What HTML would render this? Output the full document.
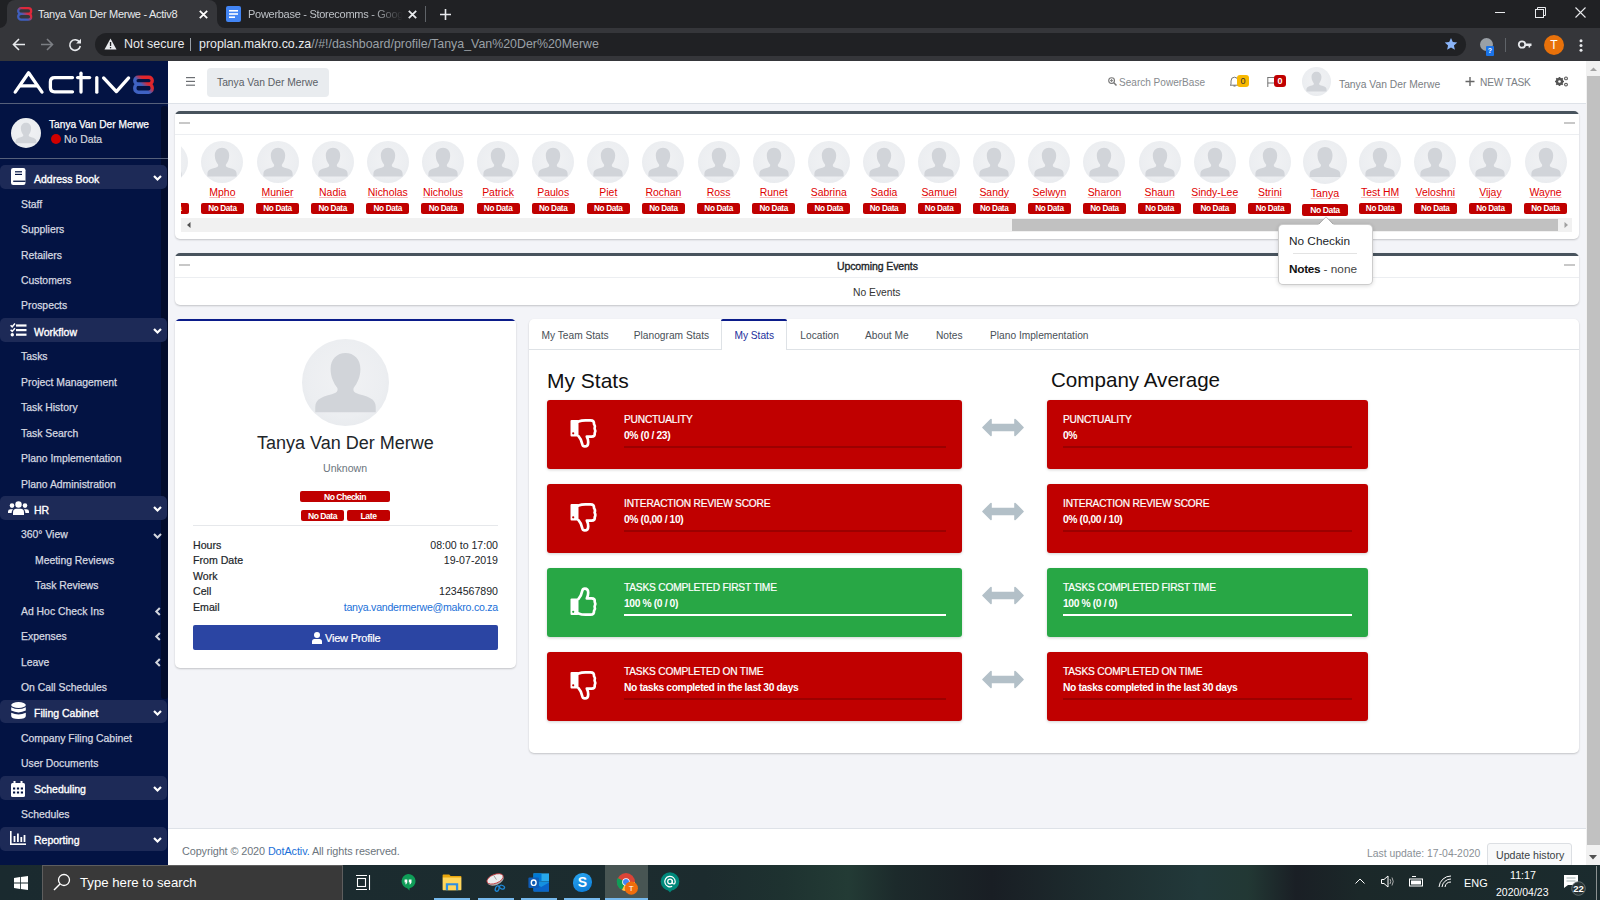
<!DOCTYPE html><html><head><meta charset="utf-8"><style>
*{box-sizing:border-box;margin:0;padding:0}
html,body{width:1600px;height:900px;overflow:hidden;background:#f3f4f8;font-family:"Liberation Sans",sans-serif;}
.a{position:absolute}
.t{position:absolute;white-space:nowrap;line-height:1}
svg{position:absolute;overflow:visible}
.sbi{position:absolute;left:21px;font-size:10.4px;color:#d6d9e0;white-space:nowrap;line-height:1;-webkit-text-stroke:0.25px #d6d9e0}
.sbh{position:absolute;left:0;width:167px;height:24px;background:#1d2a57;border-radius:5px}
.sbht{position:absolute;left:34px;font-size:10.5px;color:#fff;white-space:nowrap;line-height:1;-webkit-text-stroke:0.35px #fff}
.av{position:absolute;border-radius:50%;background:radial-gradient(circle at 50% 45%,#f1f2f4 0%,#eceef1 60%,#e3e6ea 100%);overflow:hidden}
.nm{position:absolute;font-size:10.45px;color:#e00000;text-decoration:underline;text-decoration-color:#f9bcbc;white-space:nowrap;line-height:1;text-align:center;width:60px}
.bd{position:absolute;background:#c00000;color:#fff;font-size:8.2px;font-weight:bold;text-align:center;border-radius:2px;line-height:11px;height:11px;letter-spacing:-0.35px}
.tab{position:absolute;top:331px;font-size:10.2px;color:#495057;white-space:nowrap;line-height:1}
.blk{position:absolute;border-radius:3px;box-shadow:0 1px 3px rgba(0,0,0,.18)}
.bt{position:absolute;font-size:10.2px;color:#fff;white-space:nowrap;line-height:1;letter-spacing:-0.2px;-webkit-text-stroke:0.2px #fff}
.bv{position:absolute;font-size:10.3px;color:#fff;font-weight:bold;white-space:nowrap;line-height:1;letter-spacing:-0.38px}
.pl{position:absolute;left:193px;font-size:10.6px;color:#212529;-webkit-text-stroke:0.2px #212529;white-space:nowrap;line-height:1}
.pv{position:absolute;right:1102px;font-size:10.6px;color:#212529;white-space:nowrap;line-height:1;text-align:right}
</style></head><body>

<div class="a" style="left:0;top:0;width:1600px;height:28px;background:#202124"></div>
<div class="a" style="left:0;top:28px;width:1600px;height:33px;background:#35363a"></div>
<div class="a" style="left:7px;top:0;width:210px;height:28px;background:#35363a;border-radius:8px 8px 0 0"></div>
<div class="a" style="left:0;top:18px;width:230px;height:10px;background:#35363a"></div>
<div class="a" style="left:-20px;top:0;width:27px;height:28px;background:#202124;border-radius:0 0 8px 0"></div>
<div class="a" style="left:217px;top:0;width:260px;height:28px;background:#202124;border-radius:0 0 0 8px"></div>
<svg style="left:17px;top:7px" width="16" height="14" viewBox="0 0 16 14"><defs><linearGradient id="g8" gradientUnits="userSpaceOnUse" x1="2" y1="13" x2="14" y2="1"><stop offset="0.35" stop-color="#3f5fc0"/><stop offset="0.65" stop-color="#e0283a"/></linearGradient></defs><rect x="1.2" y="1.2" width="13" height="5.6" rx="2.8" fill="none" stroke="url(#g8)" stroke-width="2.2"/><rect x="1.2" y="6.8" width="13" height="5.8" rx="2.9" fill="none" stroke="url(#g8)" stroke-width="2.2"/></svg>
<div class="t" style="left:38px;top:8.5px;font-size:11px;letter-spacing:-0.28px;color:#e8eaed">Tanya Van Der Merwe - Activ8</div>
<svg style="left:199px;top:10px" width="9" height="9" viewBox="0 0 9 9"><path d="M0.8 0.8L8.2 8.2M8.2 0.8L0.8 8.2" stroke="#fff" stroke-width="1.8"/></svg>
<svg style="left:226px;top:6px" width="15" height="16" viewBox="0 0 15 16"><rect x="0" y="0" width="15" height="16" rx="2" fill="#4285f4"/><rect x="3" y="4" width="9" height="1.6" fill="#fff"/><rect x="3" y="7.2" width="9" height="1.6" fill="#fff"/><rect x="3" y="10.4" width="6" height="1.6" fill="#fff"/></svg>
<div class="t" style="left:248px;top:8.5px;font-size:11px;letter-spacing:-0.28px;color:#bdc1c6;width:155px;overflow:hidden;-webkit-mask-image:linear-gradient(90deg,#000 80%,transparent)">Powerbase - Storecomms - Google Sheets</div>
<svg style="left:408px;top:10px" width="9" height="9" viewBox="0 0 9 9"><path d="M0.8 0.8L8.2 8.2M8.2 0.8L0.8 8.2" stroke="#e8eaed" stroke-width="1.8"/></svg>
<div class="a" style="left:425px;top:6px;width:1px;height:16px;background:#5f6368"></div>
<svg style="left:440px;top:9px" width="11" height="11" viewBox="0 0 11 11"><path d="M5.5 0V11M0 5.5H11" stroke="#e8eaed" stroke-width="1.6"/></svg>
<div class="a" style="left:1495px;top:12px;width:10px;height:1px;background:#e8eaed"></div>
<svg style="left:1535px;top:7px" width="11" height="11" viewBox="0 0 11 11"><rect x="0.5" y="2.5" width="8" height="8" fill="none" stroke="#e8eaed"/><path d="M2.5 2.5V0.5H10.5V8.5H8.5" fill="none" stroke="#e8eaed"/></svg>
<svg style="left:1575px;top:7px" width="11" height="11" viewBox="0 0 11 11"><path d="M0.5 0.5L10.5 10.5M10.5 0.5L0.5 10.5" stroke="#e8eaed" stroke-width="1.1"/></svg>
<svg style="left:12px;top:38px" width="14" height="13" viewBox="0 0 14 13"><path d="M13 6.5H1.5M7 1L1.5 6.5L7 12" fill="none" stroke="#e8eaed" stroke-width="1.6"/></svg>
<svg style="left:40px;top:38px" width="14" height="13" viewBox="0 0 14 13"><path d="M1 6.5H12.5M7 1L12.5 6.5L7 12" fill="none" stroke="#7c7f84" stroke-width="1.6"/></svg>
<svg style="left:68px;top:38px" width="14" height="14" viewBox="0 0 14 14"><path d="M11.6 4.2A5.3 5.3 0 1 0 12.3 8" fill="none" stroke="#e8eaed" stroke-width="1.6"/><path d="M13 0.8V5.6H8.2Z" fill="#e8eaed"/></svg>
<div class="a" style="left:95px;top:33px;width:1371px;height:23px;background:#202124;border-radius:12px"></div>
<svg style="left:104px;top:38px" width="13" height="12" viewBox="0 0 13 12"><path d="M6.5 0.5L12.5 11.5H0.5Z" fill="#e8eaed"/><rect x="5.9" y="4" width="1.3" height="4" fill="#202124"/><rect x="5.9" y="9" width="1.3" height="1.3" fill="#202124"/></svg>
<div class="t" style="left:124px;top:38px;font-size:12.5px;color:#e8eaed">Not secure</div>
<div class="a" style="left:190px;top:38px;width:1px;height:13px;background:#9aa0a6"></div>
<div class="t" style="left:199px;top:38px;font-size:12.4px;color:#e8eaed">proplan.makro.co.za<span style="color:#9aa0a6">//#!/dashboard/profile/Tanya_Van%20Der%20Merwe</span></div>
<svg style="left:1444px;top:37px" width="14" height="14" viewBox="0 0 24 24"><path d="M12 1.5l3.1 7.1 7.7.7-5.8 5.1 1.7 7.6L12 18l-6.7 4 1.7-7.6L1.2 9.3l7.7-.7z" fill="#8ab4f8"/></svg>
<div class="a" style="left:1480px;top:38px;width:13px;height:13px;border-radius:50%;background:#9aa0a6"></div>
<div class="a" style="left:1486px;top:46px;width:8px;height:10px;border-radius:1px;background:#1a73e8;color:#fff;font-size:7px;font-weight:bold;text-align:center;line-height:10px;font-family:'Liberation Sans'">?</div>
<div class="a" style="left:1505px;top:38px;width:1px;height:14px;background:#5f6368"></div>
<svg style="left:1518px;top:40px" width="14" height="9" viewBox="0 0 14 9"><circle cx="4" cy="4.5" r="3.2" fill="none" stroke="#e8eaed" stroke-width="1.8"/><path d="M7 3.6H13.5V6H12.2V7.6H10.6V6H7Z" fill="#e8eaed"/></svg>
<div class="a" style="left:1544px;top:35px;width:20px;height:20px;border-radius:50%;background:#e8710a;color:#fff;font-size:12px;text-align:center;line-height:20px">T</div>
<svg style="left:1579px;top:39px" width="4" height="13" viewBox="0 0 4 13"><circle cx="2" cy="1.8" r="1.5" fill="#e8eaed"/><circle cx="2" cy="6.5" r="1.5" fill="#e8eaed"/><circle cx="2" cy="11.2" r="1.5" fill="#e8eaed"/></svg>
<div class="a" style="left:0;top:61px;width:168px;height:804px;background:#031343"></div>
<svg style="left:0;top:61px" width="168" height="42" viewBox="0 61 168 42">
<g fill="none" stroke="#fff" stroke-width="3.3" stroke-linecap="round" stroke-linejoin="round">
<path d="M15.2 92.1L28.6 72.8L42 92.1"/><path d="M20.5 85.8H37"/>
<path d="M72.5 77.6H54.6Q50.4 77.6 50.4 81.8V87.6Q50.4 91.8 54.6 91.8H72.5"/>
<path d="M81 73.2V92.1"/><path d="M77.6 77.6H89.6"/>
<path d="M96.8 77.6V92.2"/>
<path d="M103.6 77.9L116.4 91.6L128.6 77.9"/>
</g>
<defs><linearGradient id="lg8" gradientUnits="userSpaceOnUse" x1="137" y1="91" x2="151" y2="77"><stop offset="0.38" stop-color="#3f62c3"/><stop offset="0.66" stop-color="#e0262c"/></linearGradient></defs>
<g fill="none" stroke="url(#lg8)" stroke-width="3.4"><rect x="134.8" y="77.2" width="17.4" height="6.9" rx="3.4"/><rect x="134.8" y="84.1" width="17.4" height="8.1" rx="3.6"/></g>
</svg>
<div class="a" style="left:0;top:103px;width:168px;height:1px;background:#56607a"></div>
<div class="a" style="left:161px;top:106px;width:7px;height:593px;background:#020c2c;border-radius:3px"></div>
<div class="av" style="left:11px;top:118px;width:30px;height:30px;box-shadow:0 0 1px rgba(0,0,0,.3)"><svg style="left:0;top:0" width="30" height="30" viewBox="0 0 42 42"><path d="M21 6.7C25 6.7 28.2 9.5 28.2 14.5C28.2 18.5 26.6 21.5 25 23.5C24.6 24.2 24.8 25.4 25.8 26C28 27 31 27.5 33 28.6C34.8 29.5 35.6 31 35.6 32.8V35.4H6.4V32.8C6.4 31 7.2 29.5 9 28.6C11 27.5 14 27 16.2 26C17.2 25.4 17.4 24.2 17 23.5C15.4 21.5 13.8 18.5 13.8 14.5C13.8 9.5 17 6.7 21 6.7Z" fill="#d1d4d9"/></svg></div>
<div class="t" style="left:49px;top:120px;font-size:10.2px;color:#fff;-webkit-text-stroke:0.25px #fff">Tanya Van Der Merwe</div>
<div class="a" style="left:51px;top:134px;width:10px;height:10px;border-radius:50%;background:#d00000"></div>
<div class="t" style="left:64px;top:135px;font-size:10.4px;color:#d3d6de;-webkit-text-stroke:0.2px #d3d6de">No Data</div>
<div class="a" style="left:0;top:158px;width:168px;height:1px;background:#56607a"></div>
<div class="sbh" style="top:165.4px;height:23.8px"></div>
<div class="sbht" style="top:173.8px">Address Book</div>
<svg style="left:11px;top:168.1px" width="15" height="17" viewBox="0 0 15 17"><rect x="0" y="0" width="14.5" height="17" rx="2.2" fill="#fff"/><rect x="4" y="3.2" width="7" height="1.2" fill="#031343"/><rect x="4" y="5.8" width="7" height="1.2" fill="#031343"/><rect x="2.2" y="12.6" width="12.3" height="1.3" fill="#031343"/></svg>
<svg style="left:153px;top:175.4px" width="9" height="6" viewBox="0 0 9 6"><path d="M1 1L4.5 4.5L8 1" fill="none" stroke="#fff" stroke-width="2.2"/></svg>
<div class="sbi" style="left:21px;top:199.6px">Staff</div>
<div class="sbi" style="left:21px;top:225.1px">Suppliers</div>
<div class="sbi" style="left:21px;top:250.5px">Retailers</div>
<div class="sbi" style="left:21px;top:276.0px">Customers</div>
<div class="sbi" style="left:21px;top:301.4px">Prospects</div>
<div class="sbh" style="top:318.1px;height:23.8px"></div>
<div class="sbht" style="top:326.5px">Workflow</div>
<svg style="left:10px;top:322.6px" width="17" height="15" viewBox="0 0 17 15"><g fill="#fff"><rect x="6" y="1.4" width="10.5" height="2.2"/><rect x="6" y="6" width="10.5" height="2.2"/><rect x="6" y="10.6" width="10.5" height="2.2"/><circle cx="2.3" cy="11.8" r="1.7"/></g><path d="M0.6 2.2L2.2 3.8L5 0.6M0.6 6.8L2.2 8.4L5 5.2" fill="none" stroke="#fff" stroke-width="1.5"/></svg>
<svg style="left:153px;top:328.1px" width="9" height="6" viewBox="0 0 9 6"><path d="M1 1L4.5 4.5L8 1" fill="none" stroke="#fff" stroke-width="2.2"/></svg>
<div class="sbi" style="left:21px;top:352.3px">Tasks</div>
<div class="sbi" style="left:21px;top:377.7px">Project Management</div>
<div class="sbi" style="left:21px;top:403.2px">Task History</div>
<div class="sbi" style="left:21px;top:428.6px">Task Search</div>
<div class="sbi" style="left:21px;top:454.1px">Plano Implementation</div>
<div class="sbi" style="left:21px;top:479.5px">Plano Administration</div>
<div class="sbh" style="top:496.1px;height:23.8px"></div>
<div class="sbht" style="top:504.5px">HR</div>
<svg style="left:8px;top:500.6px" width="21" height="14" viewBox="0 0 21 14"><g fill="#fff"><circle cx="10.5" cy="3.5" r="3.2"/><path d="M5 14V11.5Q5 7.8 8.5 7.8H12.5Q16 7.8 16 11.5V14Z"/><circle cx="4" cy="4.6" r="2.3"/><circle cx="17" cy="4.6" r="2.3"/><path d="M0 12V10.5Q0 8.2 2.5 8.2H5Q3.6 9.6 3.6 12Z"/><path d="M21 12V10.5Q21 8.2 18.5 8.2H16Q17.4 9.6 17.4 12Z"/></g></svg>
<svg style="left:153px;top:506.1px" width="9" height="6" viewBox="0 0 9 6"><path d="M1 1L4.5 4.5L8 1" fill="none" stroke="#fff" stroke-width="2.2"/></svg>
<div class="sbi" style="left:21px;top:530.4px">360° View</div>
<svg style="left:153px;top:532.6px" width="9" height="6" viewBox="0 0 9 6"><path d="M1 1L4.5 4.5L8 1" fill="none" stroke="#d3d6de" stroke-width="2"/></svg>
<div class="sbi" style="left:35px;top:555.8px">Meeting Reviews</div>
<div class="sbi" style="left:35px;top:581.3px">Task Reviews</div>
<div class="sbi" style="left:21px;top:606.7px">Ad Hoc Check Ins</div>
<svg style="left:155px;top:606.9px" width="6" height="9" viewBox="0 0 6 9"><path d="M4.8 1L1.3 4.5L4.8 8" fill="none" stroke="#d3d6de" stroke-width="2"/></svg>
<div class="sbi" style="left:21px;top:632.2px">Expenses</div>
<svg style="left:155px;top:632.4px" width="6" height="9" viewBox="0 0 6 9"><path d="M4.8 1L1.3 4.5L4.8 8" fill="none" stroke="#d3d6de" stroke-width="2"/></svg>
<div class="sbi" style="left:21px;top:657.6px">Leave</div>
<svg style="left:155px;top:657.8px" width="6" height="9" viewBox="0 0 6 9"><path d="M4.8 1L1.3 4.5L4.8 8" fill="none" stroke="#d3d6de" stroke-width="2"/></svg>
<div class="sbi" style="left:21px;top:683.0px">On Call Schedules</div>
<div class="sbh" style="top:699.7px;height:23.8px"></div>
<div class="sbht" style="top:708.1px">Filing Cabinet</div>
<svg style="left:11px;top:702.4px" width="15" height="17" viewBox="0 0 15 17"><g fill="#fff"><ellipse cx="7.5" cy="3" rx="7.3" ry="3"/><path d="M0.2 5.2Q7.5 9 14.8 5.2V8.6Q7.5 12.2 0.2 8.6Z"/><path d="M0.2 10.8Q7.5 14.4 14.8 10.8V14Q14.8 17 7.5 17Q0.2 17 0.2 14Z"/></g></svg>
<svg style="left:153px;top:709.7px" width="9" height="6" viewBox="0 0 9 6"><path d="M1 1L4.5 4.5L8 1" fill="none" stroke="#fff" stroke-width="2.2"/></svg>
<div class="sbi" style="left:21px;top:733.9px">Company Filing Cabinet</div>
<div class="sbi" style="left:21px;top:759.4px">User Documents</div>
<div class="sbh" style="top:776.0px;height:23.8px"></div>
<div class="sbht" style="top:784.4px">Scheduling</div>
<svg style="left:11px;top:780.5px" width="14" height="16" viewBox="0 0 14 16"><g fill="#fff"><rect x="0" y="2" width="14" height="14" rx="1.5"/><rect x="2.5" y="0" width="2" height="3.5"/><rect x="9.5" y="0" width="2" height="3.5"/></g><g fill="#031343"><rect x="2" y="6.5" width="2.2" height="2"/><rect x="5.9" y="6.5" width="2.2" height="2"/><rect x="9.8" y="6.5" width="2.2" height="2"/><rect x="2" y="10.5" width="2.2" height="2"/><rect x="5.9" y="10.5" width="2.2" height="2"/><rect x="9.8" y="10.5" width="2.2" height="2"/></g></svg>
<svg style="left:153px;top:786.0px" width="9" height="6" viewBox="0 0 9 6"><path d="M1 1L4.5 4.5L8 1" fill="none" stroke="#fff" stroke-width="2.2"/></svg>
<div class="sbi" style="left:21px;top:810.2px">Schedules</div>
<div class="sbh" style="top:826.9px;height:23.8px"></div>
<div class="sbht" style="top:835.3px">Reporting</div>
<svg style="left:10px;top:831.4px" width="16" height="14" viewBox="0 0 16 14"><g fill="#fff"><rect x="0" y="0" width="1.6" height="14"/><rect x="0" y="12.4" width="16" height="1.6"/><rect x="3.6" y="5" width="1.8" height="6"/><rect x="7" y="2.5" width="1.8" height="8.5"/><rect x="10.4" y="6" width="1.8" height="5"/><rect x="13.6" y="4" width="1.8" height="7"/></g></svg>
<svg style="left:153px;top:836.9px" width="9" height="6" viewBox="0 0 9 6"><path d="M1 1L4.5 4.5L8 1" fill="none" stroke="#fff" stroke-width="2.2"/></svg>
<div class="a" style="left:168px;top:61px;width:1418px;height:43px;background:#fff;border-bottom:1px solid #dee2e8"></div>
<svg style="left:186px;top:77px" width="9" height="9" viewBox="0 0 9 9"><g fill="#6c6f73"><rect y="0" width="9" height="1.2"/><rect y="3.8" width="9" height="1.2"/><rect y="7.6" width="9" height="1.2"/></g></svg>
<div class="a" style="left:207px;top:68px;width:122px;height:29px;background:#e9ecef;border-radius:4px"></div>
<div class="t" style="left:217px;top:78px;font-size:10.3px;color:#5a6066">Tanya Van Der Merwe</div>
<svg style="left:1108px;top:77px" width="9" height="9" viewBox="0 0 9 9"><circle cx="3.6" cy="3.6" r="2.9" fill="none" stroke="#777" stroke-width="1.1"/><path d="M5.8 5.8L8.5 8.5" stroke="#777" stroke-width="1.5"/><path d="M3.6 2V5.2M2 3.6H5.2" stroke="#777" stroke-width="0.9"/></svg>
<div class="t" style="left:1119px;top:77.5px;font-size:10.05px;color:#868a8e">Search PowerBase</div>
<svg style="left:1230px;top:76px" width="9" height="11" viewBox="0 0 9 11"><path d="M1 8.5V5Q1 1.2 4.5 1.2Q8 1.2 8 5V8.5L8.8 9.2H0.2Z" fill="none" stroke="#666" stroke-width="0.9"/><path d="M3.5 10H5.5" stroke="#666"/></svg>
<div class="a" style="left:1237px;top:75px;width:12px;height:12px;border-radius:3px;background:#f8b800;color:#333;font-size:9px;text-align:center;line-height:12px">0</div>
<svg style="left:1267px;top:76px" width="9" height="11" viewBox="0 0 9 11"><path d="M0.8 11V1M0.8 1.5H8V7H0.8" fill="none" stroke="#666" stroke-width="0.9"/></svg>
<div class="a" style="left:1274px;top:75px;width:12px;height:12px;border-radius:3px;background:#c00000;color:#fff;font-size:9px;font-weight:bold;text-align:center;line-height:12px">0</div>
<div class="av" style="left:1302px;top:67px;width:29px;height:29px;"><svg style="left:0;top:0" width="29" height="29" viewBox="0 0 42 42"><path d="M21 6.7C25 6.7 28.2 9.5 28.2 14.5C28.2 18.5 26.6 21.5 25 23.5C24.6 24.2 24.8 25.4 25.8 26C28 27 31 27.5 33 28.6C34.8 29.5 35.6 31 35.6 32.8V35.4H6.4V32.8C6.4 31 7.2 29.5 9 28.6C11 27.5 14 27 16.2 26C17.2 25.4 17.4 24.2 17 23.5C15.4 21.5 13.8 18.5 13.8 14.5C13.8 9.5 17 6.7 21 6.7Z" fill="#d1d4d9"/></svg></div>
<div class="t" style="left:1339px;top:80px;font-size:10.3px;color:#7a7e83">Tanya Van Der Merwe</div>
<svg style="left:1465px;top:77px" width="10" height="9" viewBox="0 0 10 9"><path d="M5 0V9M0.5 4.5H9.5" stroke="#666" stroke-width="1.4"/></svg>
<div class="t" style="left:1480px;top:78px;font-size:10.2px;color:#7a7e83;letter-spacing:-0.2px">NEW TASK</div>
<svg style="left:1554px;top:76px" width="15" height="11" viewBox="0 0 15 11"><g fill="none" stroke="#555"><circle cx="5.5" cy="5.5" r="2.6" stroke-width="2.2"/><path d="M5.5 1V10M1 5.5H10M2.3 2.3L8.7 8.7M8.7 2.3L2.3 8.7" stroke-width="1.6"/><circle cx="12" cy="2.4" r="1.4" stroke-width="1.1"/><circle cx="12" cy="8.6" r="1.4" stroke-width="1.1"/></g><circle cx="5.5" cy="5.5" r="1.3" fill="#fff"/></svg>
<div class="a" style="left:175px;top:111px;width:1404px;height:128px;background:#fff;border-radius:5px;box-shadow:0 1px 2px rgba(0,0,0,.2);overflow:hidden"><div style="position:absolute;left:0;top:0;right:0;height:3px;background:#48535d"></div><div style="position:absolute;left:0;top:23px;right:0;height:1px;background:#eceef1"></div></div>
<div class="a" style="left:179px;top:122px;width:11px;height:2px;background:#c8c8c8"></div>
<div class="a" style="left:1564px;top:122px;width:11px;height:2px;background:#c8c8c8"></div>
<div class="a" style="left:181px;top:135px;width:1391px;height:84px;overflow:hidden">
<div class="av" style="left:-35px;top:6px;width:42px;height:42px;"><svg style="left:0;top:0" width="42" height="42" viewBox="0 0 42 42"><path d="M21 6.7C25 6.7 28.2 9.5 28.2 14.5C28.2 18.5 26.6 21.5 25 23.5C24.6 24.2 24.8 25.4 25.8 26C28 27 31 27.5 33 28.6C34.8 29.5 35.6 31 35.6 32.8V35.4H6.4V32.8C6.4 31 7.2 29.5 9 28.6C11 27.5 14 27 16.2 26C17.2 25.4 17.4 24.2 17 23.5C15.4 21.5 13.8 18.5 13.8 14.5C13.8 9.5 17 6.7 21 6.7Z" fill="#d1d4d9"/></svg></div>
<div class="bd" style="left:-35.2px;top:67.5px;width:43px">No Data</div>
<div class="av" style="left:20px;top:6px;width:42px;height:42px;"><svg style="left:0;top:0" width="42" height="42" viewBox="0 0 42 42"><path d="M21 6.7C25 6.7 28.2 9.5 28.2 14.5C28.2 18.5 26.6 21.5 25 23.5C24.6 24.2 24.8 25.4 25.8 26C28 27 31 27.5 33 28.6C34.8 29.5 35.6 31 35.6 32.8V35.4H6.4V32.8C6.4 31 7.2 29.5 9 28.6C11 27.5 14 27 16.2 26C17.2 25.4 17.4 24.2 17 23.5C15.4 21.5 13.8 18.5 13.8 14.5C13.8 9.5 17 6.7 21 6.7Z" fill="#d1d4d9"/></svg></div>
<div class="nm" style="left:11.4px;top:52.8px">Mpho</div>
<div class="bd" style="left:19.9px;top:67.5px;width:43px">No Data</div>
<div class="av" style="left:76px;top:6px;width:42px;height:42px;"><svg style="left:0;top:0" width="42" height="42" viewBox="0 0 42 42"><path d="M21 6.7C25 6.7 28.2 9.5 28.2 14.5C28.2 18.5 26.6 21.5 25 23.5C24.6 24.2 24.8 25.4 25.8 26C28 27 31 27.5 33 28.6C34.8 29.5 35.6 31 35.6 32.8V35.4H6.4V32.8C6.4 31 7.2 29.5 9 28.6C11 27.5 14 27 16.2 26C17.2 25.4 17.4 24.2 17 23.5C15.4 21.5 13.8 18.5 13.8 14.5C13.8 9.5 17 6.7 21 6.7Z" fill="#d1d4d9"/></svg></div>
<div class="nm" style="left:66.5px;top:52.8px">Munier</div>
<div class="bd" style="left:75.0px;top:67.5px;width:43px">No Data</div>
<div class="av" style="left:131px;top:6px;width:42px;height:42px;"><svg style="left:0;top:0" width="42" height="42" viewBox="0 0 42 42"><path d="M21 6.7C25 6.7 28.2 9.5 28.2 14.5C28.2 18.5 26.6 21.5 25 23.5C24.6 24.2 24.8 25.4 25.8 26C28 27 31 27.5 33 28.6C34.8 29.5 35.6 31 35.6 32.8V35.4H6.4V32.8C6.4 31 7.2 29.5 9 28.6C11 27.5 14 27 16.2 26C17.2 25.4 17.4 24.2 17 23.5C15.4 21.5 13.8 18.5 13.8 14.5C13.8 9.5 17 6.7 21 6.7Z" fill="#d1d4d9"/></svg></div>
<div class="nm" style="left:121.7px;top:52.8px">Nadia</div>
<div class="bd" style="left:130.2px;top:67.5px;width:43px">No Data</div>
<div class="av" style="left:186px;top:6px;width:42px;height:42px;"><svg style="left:0;top:0" width="42" height="42" viewBox="0 0 42 42"><path d="M21 6.7C25 6.7 28.2 9.5 28.2 14.5C28.2 18.5 26.6 21.5 25 23.5C24.6 24.2 24.8 25.4 25.8 26C28 27 31 27.5 33 28.6C34.8 29.5 35.6 31 35.6 32.8V35.4H6.4V32.8C6.4 31 7.2 29.5 9 28.6C11 27.5 14 27 16.2 26C17.2 25.4 17.4 24.2 17 23.5C15.4 21.5 13.8 18.5 13.8 14.5C13.8 9.5 17 6.7 21 6.7Z" fill="#d1d4d9"/></svg></div>
<div class="nm" style="left:176.8px;top:52.8px">Nicholas</div>
<div class="bd" style="left:185.3px;top:67.5px;width:43px">No Data</div>
<div class="av" style="left:241px;top:6px;width:42px;height:42px;"><svg style="left:0;top:0" width="42" height="42" viewBox="0 0 42 42"><path d="M21 6.7C25 6.7 28.2 9.5 28.2 14.5C28.2 18.5 26.6 21.5 25 23.5C24.6 24.2 24.8 25.4 25.8 26C28 27 31 27.5 33 28.6C34.8 29.5 35.6 31 35.6 32.8V35.4H6.4V32.8C6.4 31 7.2 29.5 9 28.6C11 27.5 14 27 16.2 26C17.2 25.4 17.4 24.2 17 23.5C15.4 21.5 13.8 18.5 13.8 14.5C13.8 9.5 17 6.7 21 6.7Z" fill="#d1d4d9"/></svg></div>
<div class="nm" style="left:231.9px;top:52.8px">Nicholus</div>
<div class="bd" style="left:240.4px;top:67.5px;width:43px">No Data</div>
<div class="av" style="left:296px;top:6px;width:42px;height:42px;"><svg style="left:0;top:0" width="42" height="42" viewBox="0 0 42 42"><path d="M21 6.7C25 6.7 28.2 9.5 28.2 14.5C28.2 18.5 26.6 21.5 25 23.5C24.6 24.2 24.8 25.4 25.8 26C28 27 31 27.5 33 28.6C34.8 29.5 35.6 31 35.6 32.8V35.4H6.4V32.8C6.4 31 7.2 29.5 9 28.6C11 27.5 14 27 16.2 26C17.2 25.4 17.4 24.2 17 23.5C15.4 21.5 13.8 18.5 13.8 14.5C13.8 9.5 17 6.7 21 6.7Z" fill="#d1d4d9"/></svg></div>
<div class="nm" style="left:287.1px;top:52.8px">Patrick</div>
<div class="bd" style="left:295.6px;top:67.5px;width:43px">No Data</div>
<div class="av" style="left:351px;top:6px;width:42px;height:42px;"><svg style="left:0;top:0" width="42" height="42" viewBox="0 0 42 42"><path d="M21 6.7C25 6.7 28.2 9.5 28.2 14.5C28.2 18.5 26.6 21.5 25 23.5C24.6 24.2 24.8 25.4 25.8 26C28 27 31 27.5 33 28.6C34.8 29.5 35.6 31 35.6 32.8V35.4H6.4V32.8C6.4 31 7.2 29.5 9 28.6C11 27.5 14 27 16.2 26C17.2 25.4 17.4 24.2 17 23.5C15.4 21.5 13.8 18.5 13.8 14.5C13.8 9.5 17 6.7 21 6.7Z" fill="#d1d4d9"/></svg></div>
<div class="nm" style="left:342.2px;top:52.8px">Paulos</div>
<div class="bd" style="left:350.7px;top:67.5px;width:43px">No Data</div>
<div class="av" style="left:406px;top:6px;width:42px;height:42px;"><svg style="left:0;top:0" width="42" height="42" viewBox="0 0 42 42"><path d="M21 6.7C25 6.7 28.2 9.5 28.2 14.5C28.2 18.5 26.6 21.5 25 23.5C24.6 24.2 24.8 25.4 25.8 26C28 27 31 27.5 33 28.6C34.8 29.5 35.6 31 35.6 32.8V35.4H6.4V32.8C6.4 31 7.2 29.5 9 28.6C11 27.5 14 27 16.2 26C17.2 25.4 17.4 24.2 17 23.5C15.4 21.5 13.8 18.5 13.8 14.5C13.8 9.5 17 6.7 21 6.7Z" fill="#d1d4d9"/></svg></div>
<div class="nm" style="left:397.3px;top:52.8px">Piet</div>
<div class="bd" style="left:405.8px;top:67.5px;width:43px">No Data</div>
<div class="av" style="left:461px;top:6px;width:42px;height:42px;"><svg style="left:0;top:0" width="42" height="42" viewBox="0 0 42 42"><path d="M21 6.7C25 6.7 28.2 9.5 28.2 14.5C28.2 18.5 26.6 21.5 25 23.5C24.6 24.2 24.8 25.4 25.8 26C28 27 31 27.5 33 28.6C34.8 29.5 35.6 31 35.6 32.8V35.4H6.4V32.8C6.4 31 7.2 29.5 9 28.6C11 27.5 14 27 16.2 26C17.2 25.4 17.4 24.2 17 23.5C15.4 21.5 13.8 18.5 13.8 14.5C13.8 9.5 17 6.7 21 6.7Z" fill="#d1d4d9"/></svg></div>
<div class="nm" style="left:452.4px;top:52.8px">Rochan</div>
<div class="bd" style="left:460.9px;top:67.5px;width:43px">No Data</div>
<div class="av" style="left:517px;top:6px;width:42px;height:42px;"><svg style="left:0;top:0" width="42" height="42" viewBox="0 0 42 42"><path d="M21 6.7C25 6.7 28.2 9.5 28.2 14.5C28.2 18.5 26.6 21.5 25 23.5C24.6 24.2 24.8 25.4 25.8 26C28 27 31 27.5 33 28.6C34.8 29.5 35.6 31 35.6 32.8V35.4H6.4V32.8C6.4 31 7.2 29.5 9 28.6C11 27.5 14 27 16.2 26C17.2 25.4 17.4 24.2 17 23.5C15.4 21.5 13.8 18.5 13.8 14.5C13.8 9.5 17 6.7 21 6.7Z" fill="#d1d4d9"/></svg></div>
<div class="nm" style="left:507.6px;top:52.8px">Ross</div>
<div class="bd" style="left:516.1px;top:67.5px;width:43px">No Data</div>
<div class="av" style="left:572px;top:6px;width:42px;height:42px;"><svg style="left:0;top:0" width="42" height="42" viewBox="0 0 42 42"><path d="M21 6.7C25 6.7 28.2 9.5 28.2 14.5C28.2 18.5 26.6 21.5 25 23.5C24.6 24.2 24.8 25.4 25.8 26C28 27 31 27.5 33 28.6C34.8 29.5 35.6 31 35.6 32.8V35.4H6.4V32.8C6.4 31 7.2 29.5 9 28.6C11 27.5 14 27 16.2 26C17.2 25.4 17.4 24.2 17 23.5C15.4 21.5 13.8 18.5 13.8 14.5C13.8 9.5 17 6.7 21 6.7Z" fill="#d1d4d9"/></svg></div>
<div class="nm" style="left:562.7px;top:52.8px">Runet</div>
<div class="bd" style="left:571.2px;top:67.5px;width:43px">No Data</div>
<div class="av" style="left:627px;top:6px;width:42px;height:42px;"><svg style="left:0;top:0" width="42" height="42" viewBox="0 0 42 42"><path d="M21 6.7C25 6.7 28.2 9.5 28.2 14.5C28.2 18.5 26.6 21.5 25 23.5C24.6 24.2 24.8 25.4 25.8 26C28 27 31 27.5 33 28.6C34.8 29.5 35.6 31 35.6 32.8V35.4H6.4V32.8C6.4 31 7.2 29.5 9 28.6C11 27.5 14 27 16.2 26C17.2 25.4 17.4 24.2 17 23.5C15.4 21.5 13.8 18.5 13.8 14.5C13.8 9.5 17 6.7 21 6.7Z" fill="#d1d4d9"/></svg></div>
<div class="nm" style="left:617.8px;top:52.8px">Sabrina</div>
<div class="bd" style="left:626.3px;top:67.5px;width:43px">No Data</div>
<div class="av" style="left:682px;top:6px;width:42px;height:42px;"><svg style="left:0;top:0" width="42" height="42" viewBox="0 0 42 42"><path d="M21 6.7C25 6.7 28.2 9.5 28.2 14.5C28.2 18.5 26.6 21.5 25 23.5C24.6 24.2 24.8 25.4 25.8 26C28 27 31 27.5 33 28.6C34.8 29.5 35.6 31 35.6 32.8V35.4H6.4V32.8C6.4 31 7.2 29.5 9 28.6C11 27.5 14 27 16.2 26C17.2 25.4 17.4 24.2 17 23.5C15.4 21.5 13.8 18.5 13.8 14.5C13.8 9.5 17 6.7 21 6.7Z" fill="#d1d4d9"/></svg></div>
<div class="nm" style="left:673.0px;top:52.8px">Sadia</div>
<div class="bd" style="left:681.5px;top:67.5px;width:43px">No Data</div>
<div class="av" style="left:737px;top:6px;width:42px;height:42px;"><svg style="left:0;top:0" width="42" height="42" viewBox="0 0 42 42"><path d="M21 6.7C25 6.7 28.2 9.5 28.2 14.5C28.2 18.5 26.6 21.5 25 23.5C24.6 24.2 24.8 25.4 25.8 26C28 27 31 27.5 33 28.6C34.8 29.5 35.6 31 35.6 32.8V35.4H6.4V32.8C6.4 31 7.2 29.5 9 28.6C11 27.5 14 27 16.2 26C17.2 25.4 17.4 24.2 17 23.5C15.4 21.5 13.8 18.5 13.8 14.5C13.8 9.5 17 6.7 21 6.7Z" fill="#d1d4d9"/></svg></div>
<div class="nm" style="left:728.1px;top:52.8px">Samuel</div>
<div class="bd" style="left:736.6px;top:67.5px;width:43px">No Data</div>
<div class="av" style="left:792px;top:6px;width:42px;height:42px;"><svg style="left:0;top:0" width="42" height="42" viewBox="0 0 42 42"><path d="M21 6.7C25 6.7 28.2 9.5 28.2 14.5C28.2 18.5 26.6 21.5 25 23.5C24.6 24.2 24.8 25.4 25.8 26C28 27 31 27.5 33 28.6C34.8 29.5 35.6 31 35.6 32.8V35.4H6.4V32.8C6.4 31 7.2 29.5 9 28.6C11 27.5 14 27 16.2 26C17.2 25.4 17.4 24.2 17 23.5C15.4 21.5 13.8 18.5 13.8 14.5C13.8 9.5 17 6.7 21 6.7Z" fill="#d1d4d9"/></svg></div>
<div class="nm" style="left:783.2px;top:52.8px">Sandy</div>
<div class="bd" style="left:791.7px;top:67.5px;width:43px">No Data</div>
<div class="av" style="left:847px;top:6px;width:42px;height:42px;"><svg style="left:0;top:0" width="42" height="42" viewBox="0 0 42 42"><path d="M21 6.7C25 6.7 28.2 9.5 28.2 14.5C28.2 18.5 26.6 21.5 25 23.5C24.6 24.2 24.8 25.4 25.8 26C28 27 31 27.5 33 28.6C34.8 29.5 35.6 31 35.6 32.8V35.4H6.4V32.8C6.4 31 7.2 29.5 9 28.6C11 27.5 14 27 16.2 26C17.2 25.4 17.4 24.2 17 23.5C15.4 21.5 13.8 18.5 13.8 14.5C13.8 9.5 17 6.7 21 6.7Z" fill="#d1d4d9"/></svg></div>
<div class="nm" style="left:838.4px;top:52.8px">Selwyn</div>
<div class="bd" style="left:846.9px;top:67.5px;width:43px">No Data</div>
<div class="av" style="left:902px;top:6px;width:42px;height:42px;"><svg style="left:0;top:0" width="42" height="42" viewBox="0 0 42 42"><path d="M21 6.7C25 6.7 28.2 9.5 28.2 14.5C28.2 18.5 26.6 21.5 25 23.5C24.6 24.2 24.8 25.4 25.8 26C28 27 31 27.5 33 28.6C34.8 29.5 35.6 31 35.6 32.8V35.4H6.4V32.8C6.4 31 7.2 29.5 9 28.6C11 27.5 14 27 16.2 26C17.2 25.4 17.4 24.2 17 23.5C15.4 21.5 13.8 18.5 13.8 14.5C13.8 9.5 17 6.7 21 6.7Z" fill="#d1d4d9"/></svg></div>
<div class="nm" style="left:893.5px;top:52.8px">Sharon</div>
<div class="bd" style="left:902.0px;top:67.5px;width:43px">No Data</div>
<div class="av" style="left:958px;top:6px;width:42px;height:42px;"><svg style="left:0;top:0" width="42" height="42" viewBox="0 0 42 42"><path d="M21 6.7C25 6.7 28.2 9.5 28.2 14.5C28.2 18.5 26.6 21.5 25 23.5C24.6 24.2 24.8 25.4 25.8 26C28 27 31 27.5 33 28.6C34.8 29.5 35.6 31 35.6 32.8V35.4H6.4V32.8C6.4 31 7.2 29.5 9 28.6C11 27.5 14 27 16.2 26C17.2 25.4 17.4 24.2 17 23.5C15.4 21.5 13.8 18.5 13.8 14.5C13.8 9.5 17 6.7 21 6.7Z" fill="#d1d4d9"/></svg></div>
<div class="nm" style="left:948.6px;top:52.8px">Shaun</div>
<div class="bd" style="left:957.1px;top:67.5px;width:43px">No Data</div>
<div class="av" style="left:1013px;top:6px;width:42px;height:42px;"><svg style="left:0;top:0" width="42" height="42" viewBox="0 0 42 42"><path d="M21 6.7C25 6.7 28.2 9.5 28.2 14.5C28.2 18.5 26.6 21.5 25 23.5C24.6 24.2 24.8 25.4 25.8 26C28 27 31 27.5 33 28.6C34.8 29.5 35.6 31 35.6 32.8V35.4H6.4V32.8C6.4 31 7.2 29.5 9 28.6C11 27.5 14 27 16.2 26C17.2 25.4 17.4 24.2 17 23.5C15.4 21.5 13.8 18.5 13.8 14.5C13.8 9.5 17 6.7 21 6.7Z" fill="#d1d4d9"/></svg></div>
<div class="nm" style="left:1003.7px;top:52.8px">Sindy-Lee</div>
<div class="bd" style="left:1012.2px;top:67.5px;width:43px">No Data</div>
<div class="av" style="left:1068px;top:6px;width:42px;height:42px;"><svg style="left:0;top:0" width="42" height="42" viewBox="0 0 42 42"><path d="M21 6.7C25 6.7 28.2 9.5 28.2 14.5C28.2 18.5 26.6 21.5 25 23.5C24.6 24.2 24.8 25.4 25.8 26C28 27 31 27.5 33 28.6C34.8 29.5 35.6 31 35.6 32.8V35.4H6.4V32.8C6.4 31 7.2 29.5 9 28.6C11 27.5 14 27 16.2 26C17.2 25.4 17.4 24.2 17 23.5C15.4 21.5 13.8 18.5 13.8 14.5C13.8 9.5 17 6.7 21 6.7Z" fill="#d1d4d9"/></svg></div>
<div class="nm" style="left:1058.9px;top:52.8px">Strini</div>
<div class="bd" style="left:1067.4px;top:67.5px;width:43px">No Data</div>
<div class="av" style="left:1122px;top:5px;width:44px;height:44px;"><svg style="left:0;top:0" width="44" height="44" viewBox="0 0 42 42"><path d="M21 6.7C25 6.7 28.2 9.5 28.2 14.5C28.2 18.5 26.6 21.5 25 23.5C24.6 24.2 24.8 25.4 25.8 26C28 27 31 27.5 33 28.6C34.8 29.5 35.6 31 35.6 32.8V35.4H6.4V32.8C6.4 31 7.2 29.5 9 28.6C11 27.5 14 27 16.2 26C17.2 25.4 17.4 24.2 17 23.5C15.4 21.5 13.8 18.5 13.8 14.5C13.8 9.5 17 6.7 21 6.7Z" fill="#d1d4d9"/></svg></div>
<div class="nm" style="left:1114.0px;top:52.8px;font-size:10.7px">Tanya</div>
<div class="bd" style="left:1121.0px;top:68.5px;width:46px;height:12px;line-height:12.5px;font-size:8.6px;letter-spacing:-0.45px">No Data</div>
<div class="av" style="left:1178px;top:6px;width:42px;height:42px;"><svg style="left:0;top:0" width="42" height="42" viewBox="0 0 42 42"><path d="M21 6.7C25 6.7 28.2 9.5 28.2 14.5C28.2 18.5 26.6 21.5 25 23.5C24.6 24.2 24.8 25.4 25.8 26C28 27 31 27.5 33 28.6C34.8 29.5 35.6 31 35.6 32.8V35.4H6.4V32.8C6.4 31 7.2 29.5 9 28.6C11 27.5 14 27 16.2 26C17.2 25.4 17.4 24.2 17 23.5C15.4 21.5 13.8 18.5 13.8 14.5C13.8 9.5 17 6.7 21 6.7Z" fill="#d1d4d9"/></svg></div>
<div class="nm" style="left:1169.1px;top:52.8px">Test HM</div>
<div class="bd" style="left:1177.6px;top:67.5px;width:43px">No Data</div>
<div class="av" style="left:1233px;top:6px;width:42px;height:42px;"><svg style="left:0;top:0" width="42" height="42" viewBox="0 0 42 42"><path d="M21 6.7C25 6.7 28.2 9.5 28.2 14.5C28.2 18.5 26.6 21.5 25 23.5C24.6 24.2 24.8 25.4 25.8 26C28 27 31 27.5 33 28.6C34.8 29.5 35.6 31 35.6 32.8V35.4H6.4V32.8C6.4 31 7.2 29.5 9 28.6C11 27.5 14 27 16.2 26C17.2 25.4 17.4 24.2 17 23.5C15.4 21.5 13.8 18.5 13.8 14.5C13.8 9.5 17 6.7 21 6.7Z" fill="#d1d4d9"/></svg></div>
<div class="nm" style="left:1224.3px;top:52.8px">Veloshni</div>
<div class="bd" style="left:1232.8px;top:67.5px;width:43px">No Data</div>
<div class="av" style="left:1288px;top:6px;width:42px;height:42px;"><svg style="left:0;top:0" width="42" height="42" viewBox="0 0 42 42"><path d="M21 6.7C25 6.7 28.2 9.5 28.2 14.5C28.2 18.5 26.6 21.5 25 23.5C24.6 24.2 24.8 25.4 25.8 26C28 27 31 27.5 33 28.6C34.8 29.5 35.6 31 35.6 32.8V35.4H6.4V32.8C6.4 31 7.2 29.5 9 28.6C11 27.5 14 27 16.2 26C17.2 25.4 17.4 24.2 17 23.5C15.4 21.5 13.8 18.5 13.8 14.5C13.8 9.5 17 6.7 21 6.7Z" fill="#d1d4d9"/></svg></div>
<div class="nm" style="left:1279.4px;top:52.8px">Vijay</div>
<div class="bd" style="left:1287.9px;top:67.5px;width:43px">No Data</div>
<div class="av" style="left:1344px;top:6px;width:42px;height:42px;"><svg style="left:0;top:0" width="42" height="42" viewBox="0 0 42 42"><path d="M21 6.7C25 6.7 28.2 9.5 28.2 14.5C28.2 18.5 26.6 21.5 25 23.5C24.6 24.2 24.8 25.4 25.8 26C28 27 31 27.5 33 28.6C34.8 29.5 35.6 31 35.6 32.8V35.4H6.4V32.8C6.4 31 7.2 29.5 9 28.6C11 27.5 14 27 16.2 26C17.2 25.4 17.4 24.2 17 23.5C15.4 21.5 13.8 18.5 13.8 14.5C13.8 9.5 17 6.7 21 6.7Z" fill="#d1d4d9"/></svg></div>
<div class="nm" style="left:1334.5px;top:52.8px">Wayne</div>
<div class="bd" style="left:1343.0px;top:67.5px;width:43px">No Data</div>
</div>
<div class="a" style="left:181px;top:218px;width:1391px;height:14px;background:#f1f1f1"></div>
<div class="a" style="left:1012px;top:219px;width:546px;height:12px;background:#c1c1c1"></div>
<svg style="left:187px;top:222px" width="4" height="6" viewBox="0 0 4 6"><path d="M3.5 0V6L0 3Z" fill="#505050"/></svg>
<svg style="left:1564px;top:222px" width="4" height="6" viewBox="0 0 4 6"><path d="M0.5 0V6L4 3Z" fill="#a0a0a0"/></svg>
<div class="a" style="left:175px;top:253px;width:1404px;height:52px;background:#fff;border-radius:5px;box-shadow:0 1px 2px rgba(0,0,0,.2);overflow:hidden"><div style="position:absolute;left:0;top:0;right:0;height:2.5px;background:#48535d"></div><div style="position:absolute;left:0;top:23.5px;right:0;height:1px;background:#eceef1"></div></div>
<div class="a" style="left:179px;top:264px;width:11px;height:2px;background:#c8c8c8"></div>
<div class="a" style="left:1564px;top:264px;width:11px;height:2px;background:#c8c8c8"></div>
<div class="t" style="left:837px;top:261px;font-size:10.5px;color:#212529;-webkit-text-stroke:0.35px #212529;letter-spacing:-0.1px">Upcoming Events</div>
<div class="t" style="left:853px;top:287.5px;font-size:10.3px;color:#333">No Events</div>
<div class="a" style="left:1278px;top:224px;width:95px;height:61px;background:#fff;border:1px solid rgba(0,0,0,.2);border-radius:5px;box-shadow:0 1px 4px rgba(0,0,0,.15)"></div>
<svg style="left:1318px;top:216px" width="16" height="9" viewBox="0 0 16 9"><path d="M0 9L8 0.8L16 9" fill="#fff" stroke="rgba(0,0,0,.25)" stroke-width="1"/><rect x="0" y="8.4" width="16" height="2" fill="#fff"/></svg>
<div class="t" style="left:1289px;top:236px;font-size:11.8px;color:#212529">No Checkin</div>
<div class="a" style="left:1293px;top:253px;width:64px;height:1px;background:#e3e3e3"></div>
<div class="t" style="left:1289px;top:264px;font-size:11.8px;color:#111"><b style="letter-spacing:-0.3px">Notes</b> <span style="color:#444">- none</span></div>
<div class="a" style="left:175px;top:319px;width:341px;height:349px;background:#fff;border-radius:5px;box-shadow:0 1px 2px rgba(0,0,0,.2);overflow:hidden"><div style="position:absolute;left:0;top:0;right:0;height:2px;background:#0b1c8a"></div></div>
<div class="av" style="left:302px;top:339px;width:87px;height:87px;"><svg style="left:0;top:0" width="87" height="87" viewBox="0 0 42 42"><path d="M21 6.7C25 6.7 28.2 9.5 28.2 14.5C28.2 18.5 26.6 21.5 25 23.5C24.6 24.2 24.8 25.4 25.8 26C28 27 31 27.5 33 28.6C34.8 29.5 35.6 31 35.6 32.8V35.4H6.4V32.8C6.4 31 7.2 29.5 9 28.6C11 27.5 14 27 16.2 26C17.2 25.4 17.4 24.2 17 23.5C15.4 21.5 13.8 18.5 13.8 14.5C13.8 9.5 17 6.7 21 6.7Z" fill="#d1d4d9"/></svg></div>
<div class="t" style="left:257px;top:434px;font-size:18px;color:#212529">Tanya Van Der Merwe</div>
<div class="t" style="left:323px;top:463px;font-size:10.6px;color:#6c757d">Unknown</div>
<div class="bd" style="left:300px;top:491px;width:90px;height:11px;line-height:12.5px;font-size:8.6px;letter-spacing:-0.55px">No Checkin</div>
<div class="bd" style="left:301px;top:510px;width:43px;height:11px;line-height:12.5px;font-size:8.6px;letter-spacing:-0.5px">No Data</div>
<div class="bd" style="left:347px;top:510px;width:43px;height:11px;line-height:12.5px;font-size:8.6px;letter-spacing:-0.4px">Late</div>
<div class="a" style="left:193px;top:525px;width:305px;height:1px;background:#e6e8eb"></div>
<div class="pl" style="top:539.7px">Hours</div>
<div class="pv" style="top:539.7px;color:#212529;">08:00 to 17:00</div>
<div class="pl" style="top:555.3px">From Date</div>
<div class="pv" style="top:555.3px;color:#212529;">19-07-2019</div>
<div class="pl" style="top:570.8px">Work</div>
<div class="pl" style="top:586.3px">Cell</div>
<div class="pv" style="top:586.3px;color:#212529;">1234567890</div>
<div class="pl" style="top:601.8px">Email</div>
<div class="pv" style="top:601.8px;color:#1a6fd8;letter-spacing:-0.25px">tanya.vandermerwe@makro.co.za</div>
<div class="a" style="left:193px;top:625px;width:305px;height:25px;background:#2b45a3;border-radius:2px"></div>
<svg style="left:312px;top:632px" width="10" height="12" viewBox="0 0 10 12"><circle cx="5" cy="3" r="3" fill="#fff"/><path d="M0 12V9.5Q0 7 2.5 7H7.5Q10 7 10 9.5V12Z" fill="#fff"/></svg>
<div class="t" style="left:325px;top:633px;font-size:11px;color:#fff;letter-spacing:-0.2px;-webkit-text-stroke:0.2px #fff">View Profile</div>
<div class="a" style="left:529px;top:319px;width:1050px;height:434px;background:#fff;border-radius:5px;box-shadow:0 1px 2px rgba(0,0,0,.2)"></div>
<div class="a" style="left:529px;top:349px;width:1050px;height:1px;background:#dee2e6"></div>
<div class="a" style="left:721px;top:319px;width:66px;height:31px;background:#fff;border:1px solid #dee2e6;border-bottom:none;border-radius:4px 4px 0 0"><div style="position:absolute;left:-1px;right:-1px;top:-1px;height:2px;background:#0b1c8a;border-radius:4px 4px 0 0"></div></div>
<div class="tab" style="left:541.5px;color:#495057">My Team Stats</div>
<div class="tab" style="left:633.8px;color:#495057">Planogram Stats</div>
<div class="tab" style="left:734.4px;color:#1c2f9c">My Stats</div>
<div class="tab" style="left:800.3px;color:#495057">Location</div>
<div class="tab" style="left:865px;color:#495057">About Me</div>
<div class="tab" style="left:936px;color:#495057">Notes</div>
<div class="tab" style="left:990px;color:#495057">Plano Implementation</div>
<div class="t" style="left:547px;top:369.5px;font-size:21px;color:#111">My Stats</div>
<div class="t" style="left:1051px;top:369.5px;font-size:20.6px;color:#111">Company Average</div>
<div class="blk" style="left:547px;top:400px;width:415px;height:69px;background:#c00000"></div>
<div class="bt" style="left:624px;top:415px">PUNCTUALITY</div>
<div class="bv" style="left:624px;top:431px">0% (0 / 23)</div>
<div class="a" style="left:624px;top:446px;width:322px;height:2px;background:#9c0000"></div>
<svg style="left:570px;top:419px" width="27" height="29" viewBox="0 0 27 29"><rect x="0.5" y="1" width="8" height="16.5" rx="1" fill="#fff"/><circle cx="3.2" cy="14.3" r="1.1" fill="#c00000"/><path d="M8.5 2.6Q11.5 1.3 15.5 1.3H20.5Q24.3 1.3 24 5Q25.6 7.2 24.6 9.6Q26 12 24.7 14.2Q25.2 17.6 21.6 17.6H16.8Q18.2 20.2 18.2 23.2Q18.2 27.4 14.8 27.4Q12.8 27.4 12.3 25.2Q11.4 20.4 8.5 17.2" fill="none" stroke="#fff" stroke-width="2.7" stroke-linejoin="round" stroke-linecap="round"/></svg>
<div class="blk" style="left:1047px;top:400px;width:321px;height:69px;background:#c00000"></div>
<div class="bt" style="left:1063px;top:415px">PUNCTUALITY</div>
<div class="bv" style="left:1063px;top:431px">0%</div>
<div class="a" style="left:1063px;top:446px;width:289px;height:2px;background:#9c0000"></div>
<svg style="left:982px;top:418px" width="42" height="19" viewBox="0 0 42 19"><path d="M1 9.5L9 1.5V6.5H33V1.5L41 9.5L33 17.5V12.5H9V17.5Z" fill="#b3c0c8" stroke="#b3c0c8" stroke-width="1.6" stroke-linejoin="round"/></svg>
<div class="blk" style="left:547px;top:484px;width:415px;height:69px;background:#c00000"></div>
<div class="bt" style="left:624px;top:499px">INTERACTION REVIEW SCORE</div>
<div class="bv" style="left:624px;top:515px">0% (0,00 / 10)</div>
<div class="a" style="left:624px;top:530px;width:322px;height:2px;background:#9c0000"></div>
<svg style="left:570px;top:503px" width="27" height="29" viewBox="0 0 27 29"><rect x="0.5" y="1" width="8" height="16.5" rx="1" fill="#fff"/><circle cx="3.2" cy="14.3" r="1.1" fill="#c00000"/><path d="M8.5 2.6Q11.5 1.3 15.5 1.3H20.5Q24.3 1.3 24 5Q25.6 7.2 24.6 9.6Q26 12 24.7 14.2Q25.2 17.6 21.6 17.6H16.8Q18.2 20.2 18.2 23.2Q18.2 27.4 14.8 27.4Q12.8 27.4 12.3 25.2Q11.4 20.4 8.5 17.2" fill="none" stroke="#fff" stroke-width="2.7" stroke-linejoin="round" stroke-linecap="round"/></svg>
<div class="blk" style="left:1047px;top:484px;width:321px;height:69px;background:#c00000"></div>
<div class="bt" style="left:1063px;top:499px">INTERACTION REVIEW SCORE</div>
<div class="bv" style="left:1063px;top:515px">0% (0,00 / 10)</div>
<div class="a" style="left:1063px;top:530px;width:289px;height:2px;background:#9c0000"></div>
<svg style="left:982px;top:502px" width="42" height="19" viewBox="0 0 42 19"><path d="M1 9.5L9 1.5V6.5H33V1.5L41 9.5L33 17.5V12.5H9V17.5Z" fill="#b3c0c8" stroke="#b3c0c8" stroke-width="1.6" stroke-linejoin="round"/></svg>
<div class="blk" style="left:547px;top:568px;width:415px;height:69px;background:#28a745"></div>
<div class="bt" style="left:624px;top:583px">TASKS COMPLETED FIRST TIME</div>
<div class="bv" style="left:624px;top:599px">100 % (0 / 0)</div>
<div class="a" style="left:624px;top:614px;width:322px;height:2px;background:#fff"></div>
<svg style="left:570px;top:587px" width="27" height="29" viewBox="0 0 27 29"><rect x="0.5" y="11.5" width="8" height="16.5" rx="1" fill="#fff"/><circle cx="3.2" cy="24.8" r="1.1" fill="#28a745"/><path d="M8.5 26.4Q11.5 27.7 15.5 27.7H20.5Q24.3 27.7 24 24Q25.6 21.8 24.6 19.4Q26 17 24.7 14.8Q25.2 11.4 21.6 11.4H16.8Q18.2 8.8 18.2 5.8Q18.2 1.6 14.8 1.6Q12.8 1.6 12.3 3.8Q11.4 8.6 8.5 11.8" fill="none" stroke="#fff" stroke-width="2.7" stroke-linejoin="round" stroke-linecap="round"/></svg>
<div class="blk" style="left:1047px;top:568px;width:321px;height:69px;background:#28a745"></div>
<div class="bt" style="left:1063px;top:583px">TASKS COMPLETED FIRST TIME</div>
<div class="bv" style="left:1063px;top:599px">100 % (0 / 0)</div>
<div class="a" style="left:1063px;top:614px;width:289px;height:2px;background:#fff"></div>
<svg style="left:982px;top:586px" width="42" height="19" viewBox="0 0 42 19"><path d="M1 9.5L9 1.5V6.5H33V1.5L41 9.5L33 17.5V12.5H9V17.5Z" fill="#b3c0c8" stroke="#b3c0c8" stroke-width="1.6" stroke-linejoin="round"/></svg>
<div class="blk" style="left:547px;top:652px;width:415px;height:69px;background:#c00000"></div>
<div class="bt" style="left:624px;top:667px">TASKS COMPLETED ON TIME</div>
<div class="bv" style="left:624px;top:683px">No tasks completed in the last 30 days</div>
<div class="a" style="left:624px;top:698px;width:322px;height:2px;background:#9c0000"></div>
<svg style="left:570px;top:671px" width="27" height="29" viewBox="0 0 27 29"><rect x="0.5" y="1" width="8" height="16.5" rx="1" fill="#fff"/><circle cx="3.2" cy="14.3" r="1.1" fill="#c00000"/><path d="M8.5 2.6Q11.5 1.3 15.5 1.3H20.5Q24.3 1.3 24 5Q25.6 7.2 24.6 9.6Q26 12 24.7 14.2Q25.2 17.6 21.6 17.6H16.8Q18.2 20.2 18.2 23.2Q18.2 27.4 14.8 27.4Q12.8 27.4 12.3 25.2Q11.4 20.4 8.5 17.2" fill="none" stroke="#fff" stroke-width="2.7" stroke-linejoin="round" stroke-linecap="round"/></svg>
<div class="blk" style="left:1047px;top:652px;width:321px;height:69px;background:#c00000"></div>
<div class="bt" style="left:1063px;top:667px">TASKS COMPLETED ON TIME</div>
<div class="bv" style="left:1063px;top:683px">No tasks completed in the last 30 days</div>
<div class="a" style="left:1063px;top:698px;width:289px;height:2px;background:#9c0000"></div>
<svg style="left:982px;top:670px" width="42" height="19" viewBox="0 0 42 19"><path d="M1 9.5L9 1.5V6.5H33V1.5L41 9.5L33 17.5V12.5H9V17.5Z" fill="#b3c0c8" stroke="#b3c0c8" stroke-width="1.6" stroke-linejoin="round"/></svg>
<div class="a" style="left:168px;top:828px;width:1418px;height:37px;background:#fff;border-top:1px solid #dee2e8"></div>
<div class="t" style="left:182px;top:846px;font-size:10.85px;color:#6c757d;letter-spacing:-0.1px">Copyright © 2020 <span style="color:#1a6fd8">DotActiv.</span> All rights reserved.</div>
<div class="t" style="left:1367px;top:849px;font-size:10.4px;color:#8a9096">Last update: 17-04-2020</div>
<div class="a" style="left:1487px;top:843px;width:85px;height:24px;background:#f8f9fa;border:1px solid #dcdfe3;border-radius:3px"></div>
<div class="t" style="left:1496px;top:850px;font-size:10.6px;color:#3a3f44">Update history</div>
<div class="a" style="left:1586px;top:61px;width:14px;height:804px;background:#f1f1f1"></div>
<div class="a" style="left:1587px;top:76px;width:13px;height:769px;background:#c1c1c1"></div>
<svg style="left:1590px;top:67px" width="7" height="4" viewBox="0 0 7 4"><path d="M0 4L3.5 0.5L7 4Z" fill="#a3a3a3"/></svg>
<svg style="left:1589px;top:855px" width="8" height="5" viewBox="0 0 8 5"><path d="M0 0L4 4.5L8 0Z" fill="#505050"/></svg>
<div class="a" style="left:0;top:865px;width:1600px;height:35px;background:linear-gradient(90deg,#1a2a2f 0%,#1c2c2f 40%,#1c2b2e 44%,#1e3230 49%,#233b35 53%,#1c2a2b 56%,#191e24 62%,#1e2e30 69%,#22393a 75%,#223834 78%,#1a1f25 81%,#1b2829 85%,#1b2b2e 100%)"></div>
<svg style="left:14px;top:876px" width="14" height="14" viewBox="0 0 14 14"><g fill="#fff"><path d="M0 2L6 1.1V6.6H0Z"/><path d="M6.8 1L14 0V6.6H6.8Z"/><path d="M0 7.4H6V12.9L0 12Z"/><path d="M6.8 7.4H14V14L6.8 13Z"/></g></svg>
<div class="a" style="left:42px;top:865px;width:301px;height:35px;background:#393939;border:1px solid #5e5e5e;border-bottom:none"></div>
<svg style="left:53px;top:873px" width="18" height="18" viewBox="0 0 18 18"><circle cx="11" cy="7" r="5.5" fill="none" stroke="#fff" stroke-width="1.3"/><path d="M7 11L1 17" stroke="#fff" stroke-width="1.5"/></svg>
<div class="t" style="left:80px;top:876px;font-size:13.2px;color:#fff">Type here to search</div>
<svg style="left:356px;top:875px" width="15" height="15" viewBox="0 0 15 15"><g fill="none" stroke="#fff" stroke-width="1.1"><rect x="1.5" y="3.5" width="8" height="8"/><path d="M0 0.5H11M0 14.5H11M13.5 0V15"/></g></svg>
<svg style="left:400px;top:873px" width="16" height="18" viewBox="0 0 16 18"><path d="M8 1A7.2 7.2 0 0 1 9.5 15.3V17.6L7.2 15.2A7.2 7.2 0 0 1 8 1Z" fill="#0f9d58"/><path d="M4.6 6.5H7.3V9.4L6.2 11.2H5.1L5.9 9.4H4.6ZM8.8 6.5H11.5V9.4L10.4 11.2H9.3L10.1 9.4H8.8Z" fill="#fff"/></svg>
<svg style="left:442px;top:874px" width="20" height="17" viewBox="0 0 20 17"><path d="M0.6 1.2Q0.6 0.4 1.4 0.4H7.2L8.6 2H18.6Q19.4 2 19.4 2.8V4H0.6Z" fill="#e9a60c"/><rect x="0.6" y="3.4" width="18.8" height="12.8" rx="0.6" fill="#ffd65c"/><path d="M3.8 16.2V9.3H16.2V16.2H13.8V11.6H6.2V16.2Z" fill="#2f8fe0"/><rect x="6.2" y="11.6" width="7.6" height="4.6" fill="#ffd65c"/></svg>
<svg style="left:486px;top:872px" width="20" height="21" viewBox="0 0 20 21"><g transform="rotate(-22 9.5 8)"><ellipse cx="9.5" cy="8" rx="8.6" ry="5" fill="#a9adb0"/><ellipse cx="9.5" cy="6.8" rx="8.6" ry="4.4" fill="#eceeef" stroke="#c8353a" stroke-width="0.8"/><path d="M9.5 2.8L10.5 8" stroke="#777" stroke-width="0.6"/></g><g fill="none" stroke="#1e88d8" stroke-width="1.3"><ellipse cx="11.2" cy="16.6" rx="1.8" ry="2.8" transform="rotate(20 11.2 16.6)"/><ellipse cx="16" cy="15.2" rx="2.6" ry="1.8" transform="rotate(20 16 15.2)"/></g></svg>
<svg style="left:528px;top:873px" width="22" height="19" viewBox="0 0 22 19"><rect x="5.5" y="0.4" width="15.5" height="8" fill="#28a8ea"/><rect x="5.5" y="0.4" width="8" height="8" fill="#0078d4"/><path d="M5.5 8.4H21V17.8Q21 18.6 20.2 18.6H6.3Q5.5 18.6 5.5 17.8Z" fill="#1490df"/><path d="M5.5 9.5L13.2 14L21 9.5V18.6H5.5Z" fill="#0a64c8"/><rect x="0.4" y="4.4" width="10.6" height="10.6" rx="1" fill="#0f5bb5"/><ellipse cx="5.7" cy="9.7" rx="2.4" ry="2.7" fill="none" stroke="#fff" stroke-width="1.4"/></svg>
<div class="a" style="left:573px;top:873px;width:19px;height:19px;border-radius:50% 45% 50% 45%;background:linear-gradient(160deg,#2aa6f0,#0a78d4);color:#fff;font-weight:bold;font-size:14px;text-align:center;line-height:19px">S</div>
<div class="a" style="left:605px;top:865px;width:43px;height:35px;background:#485553"></div>
<svg style="left:616px;top:872px" width="22" height="22" viewBox="0 0 22 22"><circle cx="10" cy="10" r="9" fill="#db4437"/><path d="M10 10L1.5 6A9 9 0 0 0 6 18Z" fill="#0f9d58"/><path d="M10 10L6 18A9 9 0 0 0 19 10Z" fill="#ffcd40"/><circle cx="10" cy="10" r="3.8" fill="#fff"/><circle cx="10" cy="10" r="3" fill="#4285f4"/><circle cx="15.3" cy="16.2" r="6.6" fill="#f06d0c"/><text x="15.3" y="19.3" font-size="8" fill="#fff" text-anchor="middle" font-family="Liberation Sans">T</text></svg>
<svg style="left:660px;top:872px" width="20" height="22" viewBox="0 0 20 22"><circle cx="10" cy="9.5" r="9.3" fill="#00897b"/><path d="M6 16L10 20.5L13.5 16Z" fill="#00897b"/><circle cx="10" cy="9.5" r="2.3" fill="none" stroke="#fff" stroke-width="1.2"/><path d="M12.3 8V10.3Q12.3 12 13.6 12Q15.2 12 15.2 9.5A5.2 5.2 0 1 0 12.2 14.3" fill="none" stroke="#fff" stroke-width="1.2"/></svg>
<div class="a" style="left:434px;top:898px;width:29px;height:2px;background:#76b9ed"></div>
<div class="a" style="left:463px;top:898px;width:7px;height:2px;background:#76b9ed"></div>
<div class="a" style="left:478px;top:898px;width:36px;height:2px;background:#76b9ed"></div>
<div class="a" style="left:521px;top:898px;width:36px;height:2px;background:#76b9ed"></div>
<div class="a" style="left:564px;top:898px;width:36px;height:2px;background:#76b9ed"></div>
<div class="a" style="left:605px;top:898px;width:43px;height:2px;background:#76b9ed"></div>
<div class="a" style="left:1596px;top:866px;width:1px;height:34px;background:#8a9090"></div>
<svg style="left:1355px;top:878px" width="10" height="6" viewBox="0 0 10 6"><path d="M0.5 5.5L5 1L9.5 5.5" fill="none" stroke="#fff" stroke-width="1"/></svg>
<svg style="left:1381px;top:875px" width="14" height="13" viewBox="0 0 14 13"><path d="M0.5 4.5H3L7 1V12L3 8.5H0.5Z" fill="none" stroke="#fff" stroke-width="1"/><path d="M9 4Q10.5 6.5 9 9M11 2.5Q13.5 6.5 11 10.5" fill="none" stroke="#bbb" stroke-width="0.9"/></svg>
<svg style="left:1409px;top:876px" width="15" height="11" viewBox="0 0 15 11"><rect x="0.5" y="3" width="13" height="7" fill="none" stroke="#fff" stroke-width="1"/><rect x="2" y="4.5" width="10" height="4" fill="#fff"/><path d="M3 0.5H7" stroke="#fff"/></svg>
<svg style="left:1438px;top:875px" width="15" height="13" viewBox="0 0 15 13"><g fill="none" stroke="#fff" stroke-width="1"><path d="M1 12A12 12 0 0 1 13 1"/><path d="M4 12A9 9 0 0 1 13 4"/><path d="M7 12A6 6 0 0 1 13 7"/></g></svg>
<div class="t" style="left:1464px;top:878px;font-size:10.9px;color:#fff">ENG</div>
<div class="t" style="left:1510px;top:870px;font-size:10.7px;color:#fff">11:17</div>
<div class="t" style="left:1496px;top:886.5px;font-size:10.5px;color:#fff">2020/04/23</div>
<svg style="left:1563px;top:874px" width="24" height="22" viewBox="0 0 24 22"><path d="M1 1H15V11H5L1 14Z" fill="#fff"/><path d="M3.5 4H12.5M3.5 7H12.5" stroke="#9aa" stroke-width="0.9"/><circle cx="15.5" cy="14.5" r="6.8" fill="#2a3536" stroke="#6f7a7b" stroke-width="0.8"/><text x="15.5" y="18" font-size="9.5" font-weight="bold" fill="#fff" text-anchor="middle" font-family="Liberation Sans">22</text></svg>
</body></html>
